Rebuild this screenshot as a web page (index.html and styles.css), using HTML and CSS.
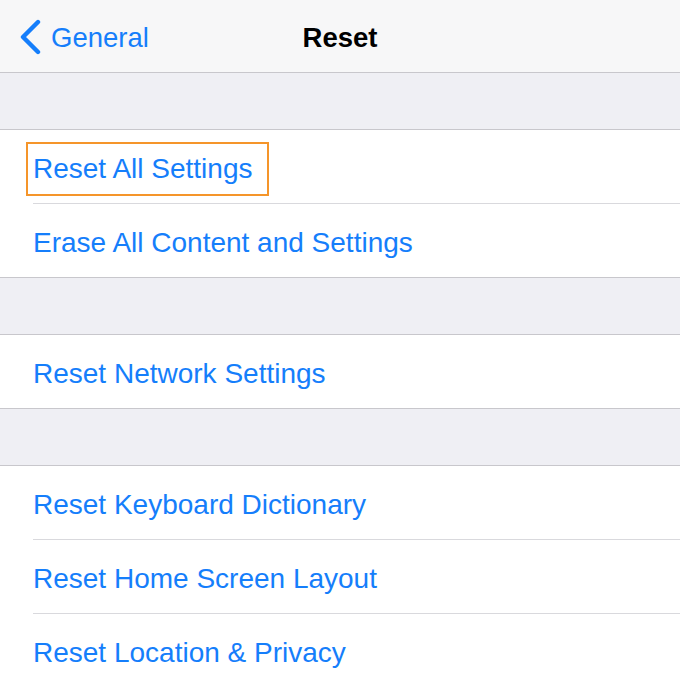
FILE: index.html
```html
<!DOCTYPE html>
<html>
<head>
<meta charset="utf-8">
<link rel="stylesheet" href="styles.css">
</head>
<body>
<div class="screen">
  <header class="navbar">
    <div class="back">
      <svg class="chev" width="24" height="36" viewBox="0 0 24 36"><path d="M20 3 L5 18 L20 33" fill="none" stroke="#157efb" stroke-width="4.4" stroke-linecap="round" stroke-linejoin="round"/></svg>
      <span class="back-label">General</span>
    </div>
    <div class="title">Reset</div>
  </header>
  <div class="spacer"></div>
  <section class="group">
    <div class="row"><span class="label highlight">Reset All Settings</span></div>
    <div class="row"><span class="label">Erase All Content and Settings</span></div>
  </section>
  <div class="spacer"></div>
  <section class="group">
    <div class="row"><span class="label">Reset Network Settings</span></div>
  </section>
  <div class="spacer"></div>
  <section class="group">
    <div class="row"><span class="label">Reset Keyboard Dictionary</span></div>
    <div class="row"><span class="label">Reset Home Screen Layout</span></div>
    <div class="row"><span class="label">Reset Location &amp; Privacy</span></div>
  </section>
</div>
</body>
</html>
```
FILE: styles.css
```css
html, body { margin: 0; padding: 0; }
body {
  width: 680px;
  height: 687px;
  overflow: hidden;
  background: #efeff4;
  font-family: "Liberation Sans", Arial, sans-serif;
}
.screen { display: flex; flex-direction: column; }
.navbar {
  position: relative;
  height: 72px;
  background: #f7f7f8;
  border-bottom: 1px solid #c8c7cc;
  display: flex;
  align-items: center;
}
.back {
  display: flex;
  align-items: center;
  padding-left: 18px;
  padding-top: 2px;
  gap: 9px;
}
.chev { display: block; }
.back-label {
  color: #157efb;
  font-size: 27.5px;
  line-height: 1;
  padding-top: 2px;
}
.title {
  position: absolute;
  left: 0; right: 0; top: 3px; bottom: 0;
  display: flex;
  align-items: center;
  justify-content: center;
  font-weight: bold;
  font-size: 27.5px;
  color: #000;
  pointer-events: none;
}
.spacer {
  height: 56px;
  border-bottom: 1px solid #c8c7cc;
}
.group {
  background: #fff;
  border-bottom: 1px solid #c8c7cc;
  padding-left: 33px;
}
.row {
  height: 73px;
  display: flex;
  align-items: center;
  border-bottom: 1px solid #d9d9dd;
}
.row:last-child { border-bottom: none; }
.label {
  color: #157efb;
  font-size: 28px;
  line-height: 1;
  padding-top: 5px;
}
.highlight {
  outline: 2px solid #f5952a;
  outline-offset: 0;
  padding: 11px 15px 11px 5px;
  margin-left: -5px;
  margin-top: 5px;
}
```
